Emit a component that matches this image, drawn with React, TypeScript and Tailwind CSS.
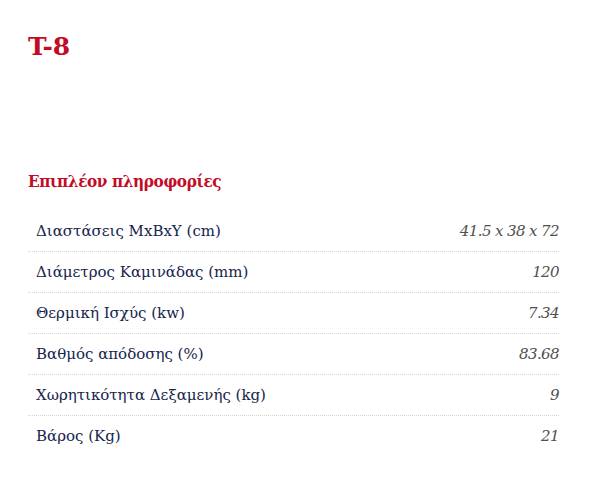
const rows = [
  { label: "Διαστάσεις ΜxΒxΥ (cm)", value: "41.5 x 38 x 72" },
  { label: "Διάμετρος Καμινάδας (mm)", value: "120" },
  { label: "Θερμική Ισχύς (kw)", value: "7.34" },
  { label: "Βαθμός απόδοσης (%)", value: "83.68" },
  { label: "Χωρητικότητα Δεξαμενής (kg)", value: "9" },
  { label: "Βάρος (Kg)", value: "21" },
];

export default function App() {
  return (
    <div
      className="min-h-[486px] bg-white pl-[28px] pr-[35px] pt-[33px]"
      style={{ fontFamily: '"DejaVu Serif", "Liberation Serif", serif' }}
    >
      <h1 className="text-[25px] font-bold leading-[28px] text-[#c30b26]">T-8</h1>

      <h2
        className="mt-[109px] text-[17px] font-bold leading-[22px] tracking-[-0.4px] text-[#c30b26]"
        style={{ fontFamily: '"DejaVu Serif Condensed", "DejaVu Serif", serif' }}
      >
        Επιπλέον πληροφορίες
      </h2>

      <div className="mt-[19px]">
        {rows.map((row, i) => (
          <div
            key={row.label}
            className={
              "flex h-[41px] items-center justify-between pl-[8px] " +
              (i < rows.length - 1 ? "border-b border-dotted border-[#d4d4d4]" : "")
            }
          >
            <span className="text-[15px] text-[#16244d]">{row.label}</span>
            <span className="text-[15px] italic tracking-[-0.6px] text-[#505050]">{row.value}</span>
          </div>
        ))}
      </div>
    </div>
  );
}
